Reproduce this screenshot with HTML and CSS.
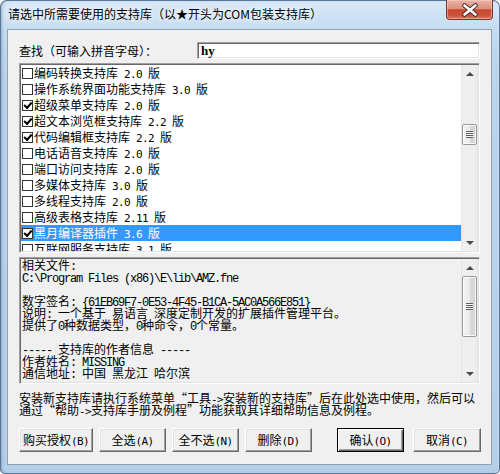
FILE: index.html
```html
<!DOCTYPE html>
<html lang="zh-CN">
<head>
  <meta charset="UTF-8">
  <title>请选中所需要使用的支持库</title>
  <link rel="stylesheet" href="styles.css">
</head>
<body>

<div class="window">
  <!-- Title bar -->
  <div class="titlebar">
    <span class="title">请选中所需要使用的支持库（以★开头为COM包装支持库）</span>
    <div class="close-btn">
      <svg width="46" height="20" viewBox="0 0 46 20">
        <path d="M17.5 5.5 L28.5 14.5 M28.5 5.5 L17.5 14.5" stroke="#4a2a22" stroke-width="4.6" stroke-linecap="round"/>
        <path d="M17.5 5.5 L28.5 14.5 M28.5 5.5 L17.5 14.5" stroke="#fff" stroke-width="2.6" stroke-linecap="round"/>
      </svg>
    </div>
  </div>

  <div class="client">
    <!-- Search row -->
    <div class="search-row">
      <label for="search">查找（可输入拼音字母）：</label>
      <div class="search-input sunken" id="search">hy</div>
    </div>

    <!-- Library list -->
    <div class="listbox sunken">
      <div class="items">
        <div class="item"><span class="chk"></span>编码转换支持库<span class="en"> 2.0 </span>版</div>
        <div class="item"><span class="chk"></span>操作系统界面功能支持库<span class="en"> 3.0 </span>版</div>
        <div class="item"><span class="chk on"></span>超级菜单支持库<span class="en"> 2.0 </span>版</div>
        <div class="item"><span class="chk on"></span>超文本浏览框支持库<span class="en"> 2.2 </span>版</div>
        <div class="item"><span class="chk on"></span>代码编辑框支持库<span class="en"> 2.2 </span>版</div>
        <div class="item"><span class="chk"></span>电话语音支持库<span class="en"> 2.0 </span>版</div>
        <div class="item"><span class="chk"></span>端口访问支持库<span class="en"> 2.0 </span>版</div>
        <div class="item"><span class="chk"></span>多媒体支持库<span class="en"> 3.0 </span>版</div>
        <div class="item"><span class="chk"></span>多线程支持库<span class="en"> 2.0 </span>版</div>
        <div class="item"><span class="chk"></span>高级表格支持库<span class="en"> 2.11 </span>版</div>
        <div class="item selected"><span class="chk on"></span>黑月编译器插件<span class="en"> 3.6 </span>版</div>
        <div class="item"><span class="chk"></span>互联网服务支持库<span class="en"> 3.1 </span>版</div>
      </div>
      <div class="scrollbar">
        <div class="sb-btn"><span class="arrow-up"></span></div>
        <div class="sb-track"><div class="sb-thumb list-thumb"><span class="grip"></span></div></div>
        <div class="sb-btn"><span class="arrow-down"></span></div>
      </div>
    </div>

    <!-- Library details -->
    <div class="infobox sunken">
<pre class="info-text">相关文件<span class="en">:</span>
<span class="en">C:\Program Files (x86)\E\lib\AMZ.fne</span>

数字签名<span class="en">: {61EB69F7-0E53-4F45-B1CA-5AC0A566E851}</span>
说明<span class="en">: </span>一个基于<span class="en"> </span>易语言<span class="en"> </span>深度定制开发的扩展插件管理平台。
提供了<span class="en">0</span>种数据类型，<span class="en">0</span>种命令，<span class="en">0</span>个常量。

<span class="en">----- </span>支持库的作者信息<span class="en"> -----</span>
作者姓名<span class="en">: MISSING</span>
通信地址<span class="en">: </span>中国<span class="en"> </span>黑龙江<span class="en"> </span>哈尔滨</pre>
      <div class="scrollbar">
        <div class="sb-btn"><span class="arrow-up"></span></div>
        <div class="sb-track"><div class="sb-thumb info-thumb"><span class="grip"></span></div></div>
        <div class="sb-btn"><span class="arrow-down"></span></div>
      </div>
    </div>

    <p class="hint">安装新支持库请执行系统菜单<span class="q">“</span>工具<span class="en">-&gt;</span>安装新的支持库<span class="q">”</span>后在此处选中使用，然后可以<br>通过<span class="q">“</span>帮助<span class="en">-&gt;</span>支持库手册及例程<span class="q">”</span>功能获取其详细帮助信息及例程。</p>

    <!-- Buttons -->
    <div class="buttons">
      <button class="btn w74">购买授权<span class="en">(B)</span></button>
      <button class="btn">全选<span class="en">(A)</span></button>
      <button class="btn">全不选<span class="en">(N)</span></button>
      <button class="btn">删除<span class="en">(D)</span></button>
      <button class="btn default push-right">确认<span class="en">(O)</span></button>
      <button class="btn w68 gap9">取消<span class="en">(C)</span></button>
    </div>
  </div>
</div>

</body>
</html>
```

FILE: styles.css
```css
* {
  box-sizing: border-box;
}
body {
  margin: 0;
  background: #fff;
  font-family: "Noto Sans CJK SC", sans-serif;
  font-size: 12px;
  color: #000;
}
/* half-width latin runs, 6px per character like the system font */
.en {
  font-family: "DejaVu Sans Mono", monospace;
  font-size: 11px;
  letter-spacing: -0.62px;
  line-height: 0;
}

/* window frame */
.window {
  width: 500px;
  height: 474px;
  padding: 0 8px 9px 7px;
  display: flex;
  flex-direction: column;
  border-radius: 7px 7px 5px 5px;
  background: linear-gradient(to bottom, #d9e9f8 0, #c6dcf1 28px, #bcd4ec 60px, #b6cfe9 100%);
  box-shadow: inset 0 0 0 1px #56769a, inset 2px 0 3px rgba(70, 90, 115, 0.35), inset -1px 0 2px rgba(255, 255, 255, 0.6);
}
.titlebar {
  height: 29px;
  display: flex;
  align-items: flex-start;
}
.title {
  padding: 6px 0 0 1px;
  line-height: 16px;
  text-shadow: 0 0 6px #fff, 0 0 10px rgba(255, 255, 255, 0.9);
}
.close-btn {
  margin-left: auto;
  margin-right: -1px;
  width: 47px;
  height: 20px;
  border: 1px solid #7c3425;
  border-top: none;
  border-radius: 0 0 4px 4px;
  background: linear-gradient(to bottom, #eab3a6 0, #de8f7d 45%, #c8482f 52%, #cc5238 80%, #db7a60 100%);
  box-shadow: inset 0 0 0 1px rgba(255, 220, 210, 0.45);
}
.close-btn svg {
  display: block;
  margin-left: -0.5px;
}

/* client area */
.client {
  flex: 1;
  background: #f0f0f0;
  border: 1px solid #8ea3bb;
  padding: 0 11px;
  display: flex;
  flex-direction: column;
}
.sunken {
  border: 1px solid;
  border-color: #a0a0a0 #fff #fff #a0a0a0;
  padding: 1px;
  box-shadow: inset 1px 1px 0 #696969, inset -1px -1px 0 #e3e3e3;
}
.search-row {
  margin-top: 12px;
  height: 17px;
  display: flex;
  align-items: center;
}
.search-row label {
  line-height: 14px;
}
.search-input {
  margin-left: auto;
  width: 283px;
  height: 17px;
  background: #fff;
  padding-left: 3px;
  font-family: "Liberation Serif", serif;
  font-size: 13px;
  font-weight: bold;
  line-height: 13px;
}

/* list */
.listbox {
  margin-top: 4px;
  height: 190px;
  display: flex;
  background: #fff;
}
.items {
  flex: 1;
  overflow: hidden;
}
.item {
  height: 16px;
  line-height: 16px;
  white-space: pre;
}
.item.selected {
  background: #3399ff;
  color: #fff;
}
.chk {
  position: relative;
  display: inline-block;
  vertical-align: -1px;
  width: 11px;
  height: 11px;
  margin: 0 1px;
  border: 1px solid #333;
  background: #fff;
}
.chk.on::after {
  content: "";
  position: absolute;
  left: 1px;
  top: 1px;
  width: 6px;
  height: 3px;
  border-left: 2px solid #000;
  border-bottom: 2px solid #000;
  transform: rotate(-48deg);
}

/* scrollbars */
.scrollbar {
  width: 17px;
  display: flex;
  flex-direction: column;
  background: linear-gradient(to right, #e3e3e3 0, #efefef 2px, #eeeeee 14px, #e6e6e6 100%);
}
.sb-btn {
  height: 17px;
  display: flex;
  align-items: center;
  justify-content: center;
}
.arrow-up {
  border-left: 4px solid transparent;
  border-right: 4px solid transparent;
  border-bottom: 4px solid #4a4a4a;
}
.arrow-down {
  border-left: 4px solid transparent;
  border-right: 4px solid transparent;
  border-top: 4px solid #4a4a4a;
}
.sb-track {
  flex: 1;
}
.sb-thumb {
  margin: 0 1px;
  border: 1px solid #9a9a9a;
  border-radius: 2px;
  background: linear-gradient(to right, #f4f4f4 0, #ebebeb 50%, #dadada 51%, #d4d4d4 100%);
  box-shadow: inset 0 0 0 1px rgba(255, 255, 255, 0.8);
  display: flex;
  align-items: center;
  justify-content: center;
}
.list-thumb {
  margin-top: 42px;
  height: 21px;
}
.info-thumb {
  margin-top: 0;
  height: 61px;
}
.grip {
  width: 7px;
  height: 7px;
  background: repeating-linear-gradient(to bottom, #5f5f5f 0, #5f5f5f 1px, #f8f8f8 1px, #f8f8f8 2px);
}

/* details */
.infobox {
  margin-top: 4px;
  height: 127px;
  display: flex;
  background: #f0f0f0;
}
.info-text {
  flex: 1;
  margin: 0;
  padding: 0 0 0 1px;
  overflow: hidden;
  font-family: "Noto Sans CJK SC", sans-serif;
  font-size: 12px;
  line-height: 12px;
}
.info-text .en {
  font-family: "Liberation Mono", monospace;
  font-size: 12px;
  letter-spacing: -1.2px;
}

.hint {
  margin: 8px 0 0;
  line-height: 12px;
  white-space: nowrap;
}
.q {
  font-feature-settings: "fwid";
}

/* buttons */
.buttons {
  margin-top: 12px;
  display: flex;
  gap: 6px;
}
.btn {
  width: 67px;
  height: 24px;
  padding: 0;
  font-family: "Noto Sans CJK SC", sans-serif;
  font-size: 12px;
  line-height: 20px;
  text-align: center;
  white-space: nowrap;
  color: #000;
  background: #f0f0f0;
  border: 1px solid;
  border-color: #fff #696969 #696969 #fff;
  box-shadow: inset -1px -1px 0 #a0a0a0, inset 1px 1px 0 #e3e3e3;
}
.btn.w74 {
  width: 74px;
}
.btn.w68 {
  width: 68px;
}
.btn.default {
  border: 1px solid #000;
  box-shadow: inset 1px 1px 0 #fff, inset -1px -1px 0 #696969, inset -2px -2px 0 #a0a0a0;
}
.push-right {
  margin-left: auto;
}
.gap9 {
  margin-left: 3px;
  margin-right: -1px;
}
```
